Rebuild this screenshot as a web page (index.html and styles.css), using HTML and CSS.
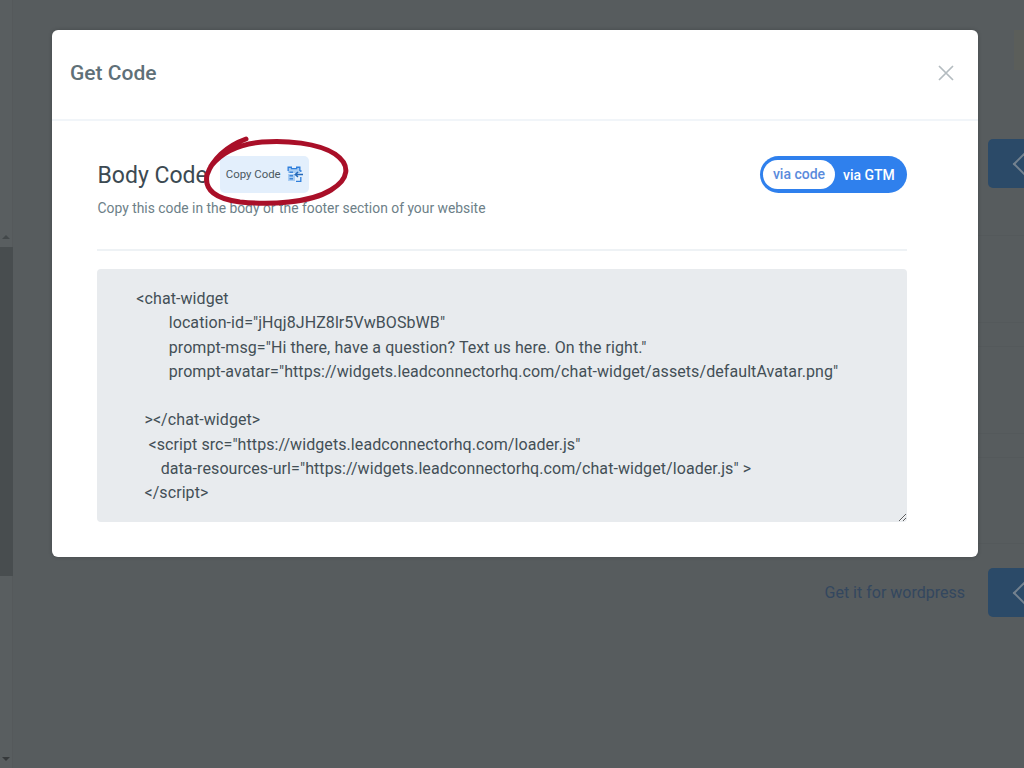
FILE: index.html
```html
<!DOCTYPE html>
<html lang="en">
<head>
<meta charset="utf-8">
<title>Get Code</title>
<link rel="stylesheet" href="styles.css">
</head>
<body>
<div class="page">
  <div class="scrollbar">
    <span class="arrow-up"></span>
    <div class="thumb"></div>
    <span class="arrow-down"></span>
  </div>
  <main class="behind">
    <div class="avatar-edge"></div>
    <div class="behind-row first"><span class="blue-btn"><span class="chev"></span></span></div>
    <div class="rule r1"></div>
    <div class="rule r2"></div>
    <div class="rule r3"></div>
    <div class="rule r4"></div>
    <div class="rule r5"></div>
    <div class="rule r6"></div>
    <div class="behind-row last"><span class="wp-link">Get it for wordpress</span><span class="blue-btn"><span class="chev"></span></span></div>
  </main>
</div>

<section class="modal">
  <header class="modal-head">
    <h2 class="modal-title">Get Code</h2>
    <svg class="close" width="18" height="18" viewBox="0 0 18 18"><path d="M2 2l14 14M16 2L2 16" fill="none" stroke="#b4bcc0" stroke-width="1.7"/></svg>
  </header>
  <div class="modal-body">
    <div class="code-head">
      <div class="code-info">
        <div class="code-title-row">
          <h3 class="code-title">Body Code</h3>
          <button class="copy-btn">Copy Code
            <svg class="copy-icon" width="16" height="16" viewBox="0 0 16 16">
              <path d="M1 2h12v5H1zM1 8h7v7H1z" fill="#a9cdf3"/>
              <path d="M0.500 5V0.500h4.500V2h4V0.500h4.500V5h-1.300V2H10.300v1.300H3.800V2H1.800v3z" fill="#2f7fdc"/>
              <path d="M2.500 5.500h3.500V7H2.500zM2.500 9h3.500v1.500H2.500zM2.500 12h3.500v1.500H2.500z" fill="#3f86d8"/>
              <path d="M16 8.500H8.500M11 6L8.300 8.500 11 11" fill="none" stroke="#2468b8" stroke-width="1.500"/>
              <path d="M13.800 6V4M13.800 11v4.500H9" fill="none" stroke="#2f7fdc" stroke-width="1.300"/>
            </svg>
          </button>
        </div>
        <p class="code-sub">Copy this code in the body or the footer section of your website</p>
      </div>
      <div class="toggle">
        <span class="toggle-on">via code</span>
        <span class="toggle-off">via GTM</span>
      </div>
    </div>
    <textarea class="code-box" spellcheck="false">       &lt;chat-widget
               location-id="jHqj8JHZ8lr5VwBOSbWB"
               prompt-msg="Hi there, have a question? Text us here. On the right."
               prompt-avatar="https://widgets.leadconnectorhq.com/chat-widget/assets/defaultAvatar.png"

         &gt;&lt;/chat-widget&gt;
          &lt;script src="https://widgets.leadconnectorhq.com/loader.js"
             data-resources-url="https://widgets.leadconnectorhq.com/chat-widget/loader.js" &gt;
         &lt;/script&gt;</textarea>
  </div>
</section>

<svg class="scribble" width="160" height="80" viewBox="200 132 160 80">
  <path d="M246 139C226 146 212 160 207 175C204 190 216 199 240 202C270 205 310 203 331 190C349 179 351 165 335 154C318 143 286 140 262 142C240 144 222 152 211 166" fill="none" stroke="#a90f28" stroke-width="5" stroke-linecap="round" stroke-linejoin="round"/>
</svg>
</body>
</html>
```
FILE: styles.css
```css
* { box-sizing: border-box; }
html, body { margin: 0; padding: 0; height: 100%; overflow: hidden; }
body { background: #575c5e; font-family: Roboto, "Liberation Sans", sans-serif; }

.page { display: flex; height: 768px; }

.scrollbar {
  width: 13px;
  display: flex;
  flex-direction: column;
  align-items: center;
  background: #595e60;
  border-right: 1px solid #55595b;
}
.arrow-up {
  margin-top: 235px;
  border-left: 4px solid transparent;
  border-right: 4px solid transparent;
  border-bottom: 4px solid #43484a;
}
.thumb { width: 13px; height: 329px; margin-top: 8px; background: #484d4f; }
.arrow-down {
  margin-top: 181px;
  border-left: 4px solid transparent;
  border-right: 4px solid transparent;
  border-top: 4px solid #36393b;
}

.behind { flex: 1; position: relative; display: flex; flex-direction: column; overflow: hidden; }
.avatar-edge { position: absolute; right: 0; top: 30px; width: 10px; height: 40px; background: #5b5e5a; }
.behind-row { display: flex; justify-content: flex-end; align-items: center; gap: 23px; margin-right: -14px; }
.behind-row.first { margin-top: 139px; }
.behind-row.last { margin-top: 380px; }
.blue-btn {
  width: 50px;
  height: 49px;
  background: #2b4a68;
  border-radius: 5px 0 0 5px;
  display: flex;
  align-items: center;
  padding-left: 28px;
}
.chev {
  flex: none;
  width: 16px;
  height: 16px;
  border-left: 2px solid #74828f;
  border-bottom: 2px solid #74828f;
  transform: rotate(45deg);
}
.wp-link { color: #33475f; font-size: 16px; }
.rule { position: absolute; right: 0; width: 46px; height: 1px; background: #54595b; }
.r1 { top: 235px; }
.r2 { top: 322px; }
.r3 { top: 346px; }
.r4 { top: 433px; }
.r5 { top: 457px; }
.r6 { top: 543px; }

.modal {
  position: absolute;
  left: 52px;
  top: 30px;
  width: 926px;
  height: 527px;
  background: #fff;
  border-radius: 6px;
  box-shadow: 0 0 4px rgba(0, 0, 0, 0.2);
}
.modal-head {
  height: 91px;
  padding: 0 23px 4px 18px;
  display: flex;
  justify-content: space-between;
  align-items: center;
  border-bottom: 2px solid #f1f5f9;
}
.modal-title { margin: 0; font-size: 21px; font-weight: 500; color: #5f7078; }
.close { display: block; }

.modal-body { padding: 35px 71px 0 45px; }
.code-head {
  display: flex;
  justify-content: space-between;
  align-items: flex-start;
  height: 95px;
  border-bottom: 2px solid #eef2f5;
}
.code-info { padding-left: 0.500px; }
.code-title-row { display: flex; align-items: center; gap: 12px; height: 37px; }
.code-title { margin: 0; padding-top: 1px; font-size: 23px; font-weight: 400; color: #3c4a52; }
.copy-btn {
  width: 89px;
  height: 37px;
  border: 0;
  border-radius: 5px;
  background: #e3effc;
  display: flex;
  align-items: center;
  gap: 6px;
  padding: 0 0 1px 6px;
  color: #4a5860;
  font: 400 11.400px Roboto, "Liberation Sans", sans-serif;
}
.copy-icon { display: block; }
.code-sub { margin: 6px 0 0; font-size: 13.860px; line-height: 18px; color: #6d7f88; }

.toggle {
  width: 147px;
  height: 37px;
  border-radius: 19px;
  background: #2f80ed;
  display: flex;
  align-items: center;
  padding-left: 3px;
  font-size: 14px;
  font-weight: 500;
}
.toggle-on {
  width: 72px;
  height: 29px;
  line-height: 29px;
  border-radius: 15px;
  background: #fff;
  color: #5a8bdc;
  text-align: center;
}
.toggle-off { margin-left: 8px; color: #fff; }

.code-box {
  display: block;
  width: 810px;
  height: 253px;
  margin-top: 18px;
  padding: 18px 11px 0;
  border: 0;
  outline: 0;
  border-radius: 4px;
  background: #e8ebee;
  color: #434f56;
  font: 400 16px/24.300px Roboto, "Liberation Sans", sans-serif;
  letter-spacing: 0.080px;
  white-space: pre;
  overflow: hidden;
  resize: both;
}

.scribble { position: absolute; left: 200px; top: 132px; pointer-events: none; }
```
